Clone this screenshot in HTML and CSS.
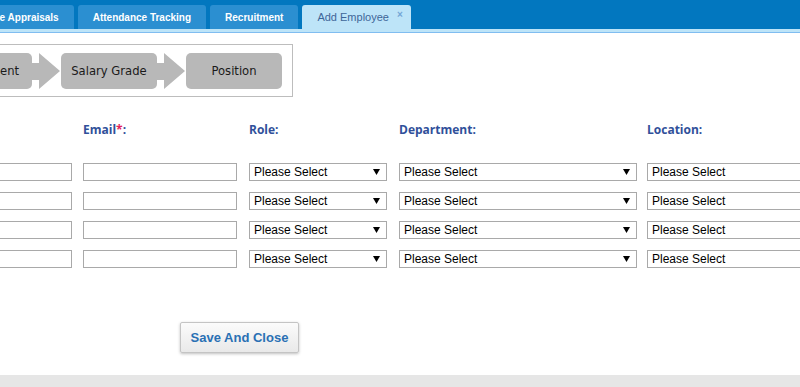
FILE: index.html
```html
<!DOCTYPE html>
<html lang="en">
<head>
  <meta charset="UTF-8">
  <title>Add Employee</title>
  <link rel="stylesheet" href="styles.css">
</head>
<body>
<div class="page">

  <div class="header">
    <ul class="tabs">
      <li class="tab">Performance Appraisals</li>
      <li class="tab">Attendance Tracking</li>
      <li class="tab">Recruitment</li>
      <li class="tab active">Add Employee <span class="tab-close">×</span></li>
    </ul>
  </div>

  <!-- workflow steps -->
  <div class="workflow">
    <div class="step">Department</div>
    <svg class="step-arrow" width="29" height="36" viewBox="0 0 29 36"><polygon points="0,10 7,10 7,0 28,18 7,36 7,27 0,27"/></svg>
    <div class="step">Salary Grade</div>
    <svg class="step-arrow" width="29" height="36" viewBox="0 0 29 36"><polygon points="0,10 7,10 7,0 28,18 7,36 7,27 0,27"/></svg>
    <div class="step">Position</div>
  </div>

  <div class="form-grid">
    <label class="field-label">Name<span class="req">*</span>:</label>
    <label class="field-label">Email<span class="req">*</span>:</label>
    <label class="field-label">Role:</label>
    <label class="field-label">Department:</label>
    <label class="field-label">Location:</label>

    <input class="text-input" type="text">
    <input class="text-input" type="text">
    <select class="select-input select-role"><option>Please Select</option></select>
    <select class="select-input select-wide"><option>Please Select</option></select>
    <select class="select-input select-wide"><option>Please Select</option></select>

    <input class="text-input" type="text">
    <input class="text-input" type="text">
    <select class="select-input select-role"><option>Please Select</option></select>
    <select class="select-input select-wide"><option>Please Select</option></select>
    <select class="select-input select-wide"><option>Please Select</option></select>

    <input class="text-input" type="text">
    <input class="text-input" type="text">
    <select class="select-input select-role"><option>Please Select</option></select>
    <select class="select-input select-wide"><option>Please Select</option></select>
    <select class="select-input select-wide"><option>Please Select</option></select>

    <input class="text-input" type="text">
    <input class="text-input" type="text">
    <select class="select-input select-role"><option>Please Select</option></select>
    <select class="select-input select-wide"><option>Please Select</option></select>
    <select class="select-input select-wide"><option>Please Select</option></select>
  </div>

  <div class="actions">
    <button class="btn-save">Save And Close</button>
  </div>

  <div class="footer-strip"></div>
</div>
</body>
</html>
```

FILE: styles.css
```css
html, body {
  margin: 0;
  padding: 0;
  background: #fff;
  overflow: hidden;
  font-family: 'Liberation Sans', Arial, sans-serif;
}

/* page is scrolled sideways a bit */
.page {
  width: 890px;
  margin-left: -90px;
}

/* tab bar */
.header {
  border-bottom: 1px solid #80bdf0;
}

.tabs {
  display: flex;
  gap: 4px;
  margin: 0;
  padding: 5px 0 0 19px;
  list-style: none;
  background: #0277bf;
  border-bottom: 3px solid #bde4f8;
}

.tab {
  display: flex;
  align-items: center;
  height: 24px;
  padding: 0 15px;
  background: #2b8fd1;
  border-radius: 3px 3px 0 0;
  color: #fff;
  font-size: 10px;
  font-weight: bold;
  white-space: nowrap;
}

.tab.active {
  padding-right: 8px;
  background: #bde4f8;
  color: #3d6699;
  font-size: 11px;
  font-weight: normal;
}

.tab-close {
  align-self: flex-start;
  margin: 5px 0 0 8px;
  font-size: 10px;
  line-height: 10px;
  font-weight: bold;
  color: #74a6d6;
}

/* workflow */
.workflow {
  display: flex;
  width: 346px;
  margin: 11px 0 0 15px;
  padding: 8px 10px 7px 10px;
  border: 1px solid #bdbdbd;
}

.step {
  width: 96px;
  height: 36px;
  line-height: 37px;
  background: #b8b8b8;
  border-radius: 5px;
  text-align: center;
  font-family: 'DejaVu Sans', sans-serif;
  font-size: 11.6px;
  color: #1a1a1a;
  white-space: nowrap;
}

.step-arrow {
  display: block;
  fill: #b8b8b8;
}

/* form */
.form-grid {
  display: grid;
  grid-template-columns: 165px 166px 150px 248px 200px;
  row-gap: 11px;
  margin: 25px 0 0 8px;
}

.field-label {
  height: 16px;
  line-height: 16px;
  margin-bottom: 14px;
  font-family: 'Open Sans', sans-serif;
  font-size: 12px;
  font-weight: bold;
  color: #30509a;
  white-space: nowrap;
}

.req {
  color: #e3245c;
}

.text-input,
.select-input {
  box-sizing: border-box;
  height: 18px;
  margin: 0;
  border: 1px solid #a9a9a9;
  background-color: #fff;
  font-family: 'Liberation Sans', Arial, sans-serif;
  font-size: 12px;
  color: #000;
}

.text-input {
  width: 154px;
  padding: 0 3px;
}

.select-input {
  appearance: none;
  -webkit-appearance: none;
  border-radius: 0;
  padding: 0 16px 0 4px;
  background-image: url("data:image/svg+xml,%3Csvg xmlns='http://www.w3.org/2000/svg' width='7' height='6'%3E%3Cpolygon points='0,0 7,0 3.5,6' fill='%23000'/%3E%3C/svg%3E");
  background-repeat: no-repeat;
  background-position: right 6px center;
}

.select-role {
  width: 138px;
}

.select-wide {
  width: 238px;
}

/* buttons */
.actions {
  margin: 54px 0 0 270px;
}

.btn-save {
  width: 119px;
  height: 31px;
  padding: 0;
  border: 1px solid #c4c4c4;
  border-radius: 2px;
  background: linear-gradient(#fbfbfb, #e9e9e9);
  box-shadow: 0 1px 3px rgba(0,0,0,0.25);
  font-family: 'Liberation Sans', Arial, sans-serif;
  font-size: 13px;
  font-weight: bold;
  color: #2a70b4;
  cursor: pointer;
}

.footer-strip {
  height: 12px;
  margin-top: 22px;
  background: #e6e6e6;
}
```
